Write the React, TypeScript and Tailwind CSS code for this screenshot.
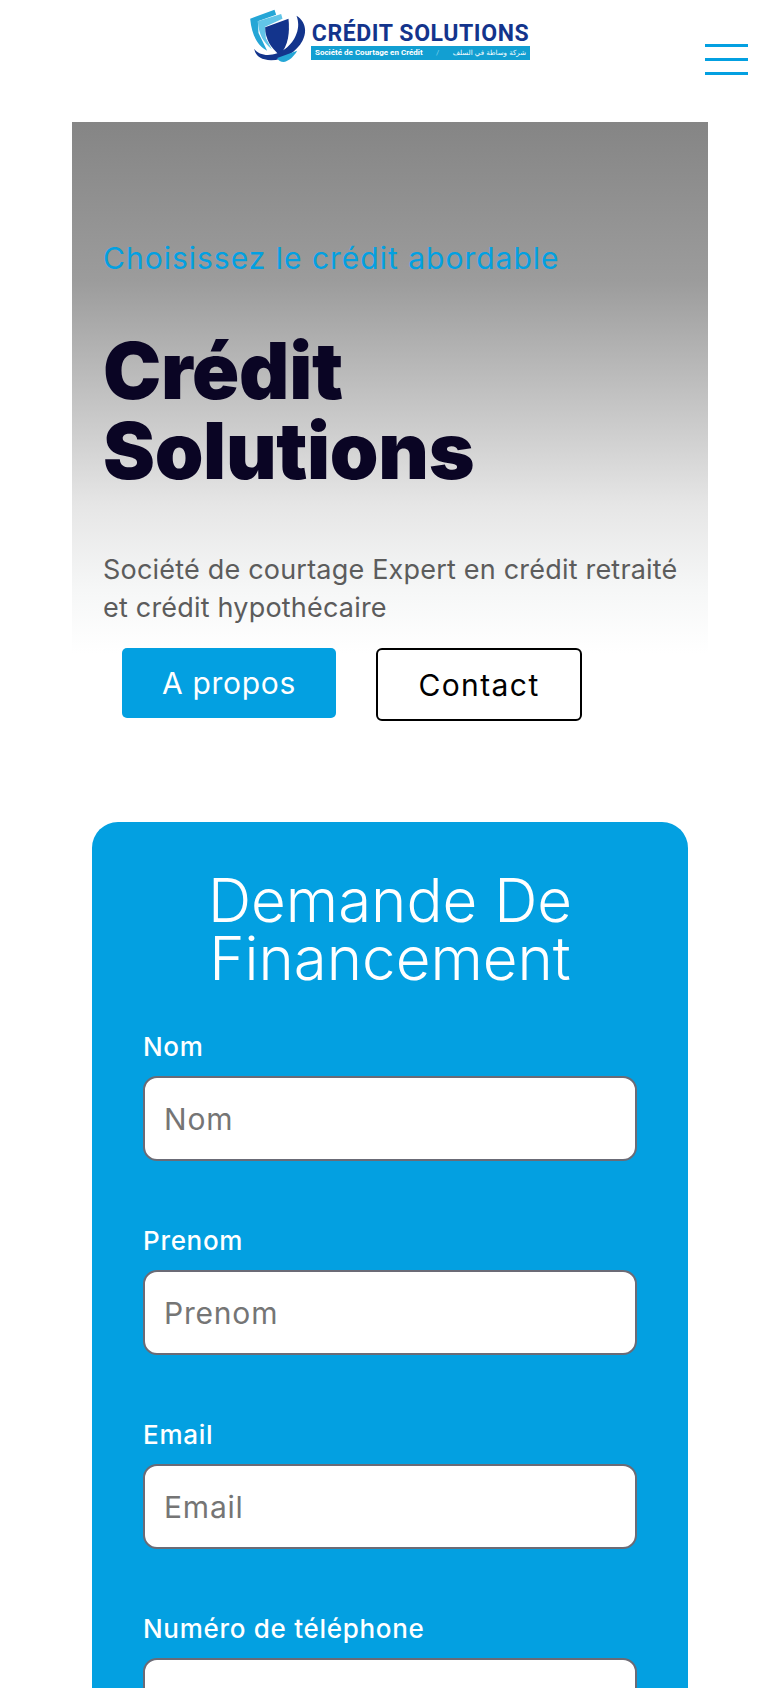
const ff = "font-['Inter','Open_Sans',sans-serif]";

function Logo() {
  return (
    <div className="flex items-start">
      <svg width="57" height="55" viewBox="15 10 170 165" className="mt-[8px] shrink-0">
        <path d="M15 42 L88 15 L93 30 L38 50 L40 85 L66 138 C40 125 20 95 15 42Z" fill="#25a6d6" />
        <path d="M38 50 L108 28 L112 42 L60 66 L62 100 L80 134 C56 115 40 90 38 50Z" fill="#62c5e8" />
        <path d="M60 68 L130 42 C134 85 130 120 104 152 C78 130 60 105 60 68Z" fill="#13348c" />
        <path d="M154 33 C178 48 188 75 172 108 C152 146 100 176 58 164 C40 159 30 148 27 132 C40 150 66 156 96 146 C140 130 172 78 154 33Z" fill="#13348c" />
        <path d="M96 160 L156 138 C146 156 132 168 116 172 C106 172 100 168 96 160Z" fill="#25a6d6" />
      </svg>
      <div className="ml-[4px] flex w-[219px] flex-col">
        <div className="mt-[22px] h-[24px] text-center font-['Roboto',sans-serif] text-[23px] leading-[24px] font-bold tracking-[0.6px] whitespace-nowrap text-[#13348c]">CRÉDIT SOLUTIONS</div>
        <div className="flex h-[14px] items-center justify-between bg-[#129fd2] px-[4px] text-[8px] leading-[14px] font-bold whitespace-nowrap text-white">
          <span className="font-['Roboto',sans-serif]">Société de Courtage en Crédit</span>
          <span className="font-['Roboto',sans-serif] font-normal text-[#7fd0ea]">/</span>
          <span dir="rtl" className="font-['DejaVu_Sans',sans-serif] text-[7px] font-normal">شركة وساطة في السلف</span>
        </div>
      </div>
    </div>
  );
}

function Field({ label, placeholder }: { label: string; placeholder?: string }) {
  return (
    <div className="mb-[62px] flex flex-col">
      <label className="mb-[11px] text-[26px] leading-[36px] font-medium tracking-[0.7px] text-white">{label}</label>
      <input
        placeholder={placeholder}
        className="h-[85px] w-full rounded-[14px] border-2 border-[#6b6b76] bg-white px-[19px] text-[30px] tracking-[0.8px] text-[#333] placeholder:text-[#757575]"
      />
    </div>
  );
}

export default function App() {
  return (
    <div className={`${ff} h-[1688px] overflow-hidden bg-white`}>
      <header className="relative flex h-[122px] justify-center">
        <Logo />
        <button className="absolute top-[44px] left-[705px] flex w-[43px] flex-col gap-[11px]">
          <span className="h-[3px] bg-[#03a0e1]" />
          <span className="h-[3px] bg-[#03a0e1]" />
          <span className="h-[3px] bg-[#03a0e1]" />
        </button>
      </header>

      <section className="mx-[72px] h-[532px] bg-[linear-gradient(180deg,#858585_0%,#9c9c9c_30%,#c8c8c8_55%,#e6e6e6_72%,#f6f7f7_88%,#ffffff_100%)] px-[31px] pt-[115px]">
        <p className="text-[30px] leading-[42px] tracking-[1px] whitespace-nowrap text-[#03a0e1]">Choisissez le crédit abordable</p>
        <h1 className="mt-[52px] text-[78px] leading-[80px] font-black tracking-[-0.3px] text-[#0a0524]">Crédit<br />Solutions</h1>
        <p className="mt-[60px] text-[27px] leading-[38px] tracking-[0.2px] whitespace-nowrap text-[#5c5c5c]">Société de courtage Expert en crédit retraité<br />et crédit hypothécaire</p>
      </section>

      <div className="-mt-[6px] ml-[122px] flex items-start gap-[40px]">
        <a className="flex h-[70px] w-[214px] items-center justify-center rounded-[5px] bg-[#03a0e1] text-[30px] tracking-[0.7px] text-white">A propos</a>
        <a className="flex h-[73px] w-[206px] items-center justify-center rounded-[6px] border-2 border-black bg-white pt-[1px] text-[30px] tracking-[1.4px] text-black">Contact</a>
      </div>

      <section className="mx-[92px] mt-[101px] h-[900px] rounded-[26px] bg-[#03a0e1] px-[51px] pt-[49px]">
        <h2 className="text-center text-[60px] leading-[58px] font-[350] text-white">Demande De<br />Financement</h2>
        <div className="mt-[42px]">
          <Field label="Nom" placeholder="Nom" />
          <Field label="Prenom" placeholder="Prenom" />
          <Field label="Email" placeholder="Email" />
          <Field label="Numéro de téléphone" />
        </div>
      </section>
    </div>
  );
}
